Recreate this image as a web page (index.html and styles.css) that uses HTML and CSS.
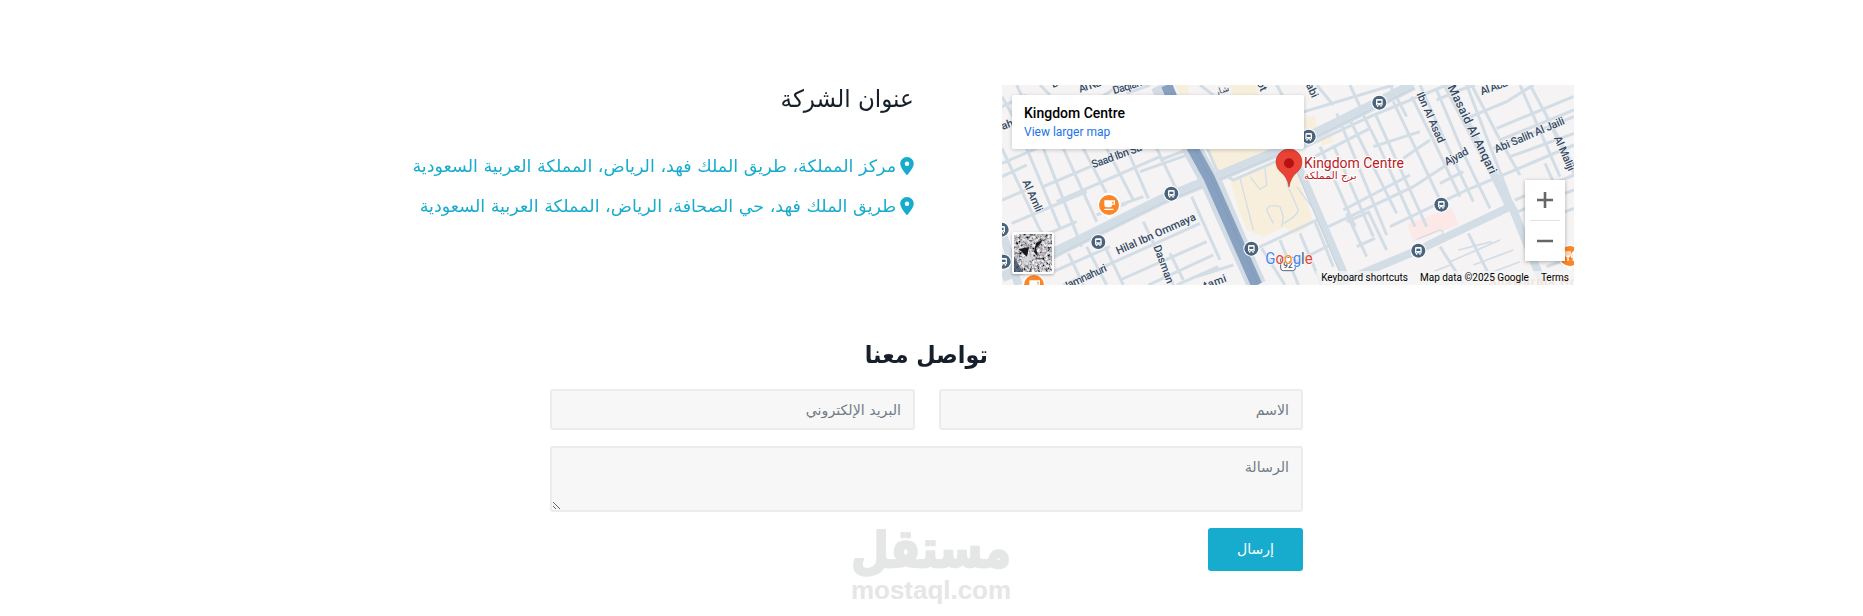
FILE: index.html
```html
<!DOCTYPE html>
<html lang="ar">
<head>
<meta charset="utf-8">
<title>تواصل معنا</title>
<link rel="stylesheet" href="styles.css">
</head>
<body>
<main dir="rtl">
  <section class="location">
    <div class="map" dir="ltr">
      <svg class="map-canvas" viewBox="6 15 1716 600">
        <defs>
          <g id="bus">
            <circle r="24" fill="#fff"/><circle r="21" fill="#4b647d"/>
            <path d="M-10-7q0-4 4-4H6q4 0 4 4V8H7v4H3V8H-3v4H-7V8h-3z" fill="#fff"/>
            <path d="M-6-6H6V1H-6z" fill="#4b647d"/><circle cx="-5" cy="5" r="1.6" fill="#4b647d"/><circle cx="5" cy="5" r="1.6" fill="#4b647d"/>
          </g>
          <g id="cafe">
            <path d="M0 44Q-8 34-20 28A36 36 0 1 1 20 28Q8 34 0 44z" fill="#fff" stroke="#d8dadd"/>
            <circle r="30" fill="#fb8527"/>
            <path d="M-14-14H18V-1H10Q9 7 2 7H-7Q-14 7-14 0zM10-10V-4H14V-10zM-14 11H14V15H-14z" fill="#fff"/>
          </g>
        </defs>
        <rect x="6" y="15" width="1716" height="600" fill="#f5f3f4"/>
        <g fill="#f7efdc">
          <path d="M525 15H565V45H540zM690 15H775V60H700zM895 120L945 105L955 190L900 200zM955 158L990 146L1000 185L965 197z"/>
          <path d="M620 205H820L800 220L650 272zM690 300L830 240L880 250L940 425L910 450L880 465L855 440L790 470L740 450L720 400z"/>
        </g>
        <path d="M1223 432L1355 383L1375 435L1240 485z" fill="#fce8e7"/>
        <g class="street">
          <path d="M6 80L80 45M6 250L110 205M50 15L80 80M120 15L150 45M6 50L45 120M80 205L180 445M130 205L245 500M6 205L115 440L150 500M6 360L90 325M35 430L260 335M110 475L230 425M190 205L290 425M250 205L345 390M320 205L400 360M380 205L445 355M470 205L530 330M130 320L400 205M170 365L480 230M290 405L380 370M290 60L360 15M380 40L450 15M480 240L560 210M420 275L590 215M6 290L80 255M345 380L430 350"/>
          <path d="M205 520L250 615M260 500L320 615M315 500L370 615M430 425L520 615M160 575L330 500M190 615L600 430M360 600L620 485M445 615L640 525M530 615L655 560M510 520L550 600M575 350L660 540M590 590L700 555"/>
          <path d="M600 15L640 45M650 270L700 300L860 230M655 285L750 510M760 510L950 420M840 480L895 615M900 460L965 615M945 425L1000 560M785 505L855 615M860 560L990 495M620 200L650 270M830 15L850 50M950 15L1000 75M905 205L1110 110L1340 15M895 100L1180 15M1080 85L1140 205L1245 440M1010 100L1160 465M1050 120L1190 400M1125 100L1280 440M1180 65L1325 370M1235 50L1300 180L1380 350M1120 200L1260 155M1210 235L1290 180M915 245L1110 145M1170 15L1220 110M1050 15L1080 80M960 200L1065 440M1000 195L1120 470M985 440L1240 320L1400 215M1030 390L1230 285M1070 500L1125 475M1040 400L1100 530M1105 395L1160 510M1040 425L1110 395M1170 440L1400 330L1580 255L1722 195M1260 15L1345 205L1420 365M1310 30L1390 220L1470 385M1320 310L1390 275M1450 235L1520 380"/>
          <path d="M1310 60L1380 30L1425 15M1400 115L1520 65L1600 15M1400 15L1530 355M1490 145L1720 50M1500 180L1722 90M1415 15L1500 180L1560 285M1560 15L1680 290M1590 15L1722 260M1640 110L1722 280M1480 205L1722 110M1530 230L1722 160M1545 360L1722 285M1540 400L1722 330M1635 250L1675 340M1640 560L1722 530"/>
          <path d="M1405 460L1480 610M1320 500L1390 610M1600 430L1722 385"/>
          <path stroke-width="5" d="M1375 510L1475 485M1350 545L1500 480M1420 555L1540 510M1440 590L1560 545M1300 575L1350 555"/>
        </g>
        <path class="path" d="M1250 478L1320 450Q1333 452 1327 463L1280 487M750 290L780 328L800 315L795 265M720 295L760 450M820 430L800 390Q805 370 840 380L850 410L845 440M860 310L895 390Q890 410 850 430M890 320L950 400"/>
        <g class="avenue">
          <path d="M6 590L110 550L170 515L480 362L630 300L850 208L1010 130L1240 15" stroke-width="32"/>
          <path d="M6 450Q28 530 55 615M895 260L1040 600M1010 612L1255 510L1535 378M1340 15L1485 290L1540 390L1630 615" stroke-width="24"/>
        </g>
        <path class="avenue-line" d="M110 560L172 524L482 371L632 309L852 217L1012 139L1242 24M885 262L1030 600"/>
        <path d="M480 15L575 205L628 300L675 405L770 615" fill="none" stroke="#d2dce4" stroke-width="58"/>
        <path d="M500 15L578 205L628 295L668 385L770 615" fill="none" stroke="#89a1c1" stroke-width="34"/>
        <path d="M505 15L583 205L633 295L673 385L775 615" fill="none" stroke="#7e98b9" stroke-width="2"/>
        <g class="label">
          <text transform="translate(279 265) rotate(-20)" textLength="158">Saad Ibn Sa</text>
          <text transform="translate(240 38) rotate(-18)" textLength="85">Al Nad</text>
          <text transform="translate(342 43) rotate(-17)" textLength="90">Daqiah</text>
          <text transform="translate(8 150) rotate(-20)">ah</text>
          <text transform="translate(158 24) rotate(-18)">D</text>
          <text transform="translate(67 305) rotate(66)" textLength="102">Al Amli</text>
          <text transform="translate(354 524) rotate(-24)" textLength="258">Hilal Ibn Ommaya</text>
          <text transform="translate(460 500) rotate(70)" textLength="120">Dasman</text>
          <text transform="translate(194 632) rotate(-25)" textLength="142">Jamnahuri</text>
          <text transform="translate(616 628) rotate(-20)" textLength="70">tami</text>
          <text transform="translate(770 9) rotate(66)">ot</text>
          <text transform="translate(917 15) rotate(65)" textLength="45">abi</text>
          <text transform="translate(1249 42) rotate(66)" textLength="163">Ibn Al Asad</text>
          <text class="label-major" transform="translate(1342 22) rotate(64)" textLength="292">Masaid Al Anqari</text>
          <text transform="translate(1445 46) rotate(-20)" textLength="85">Al Aba</text>
          <text transform="translate(1340 257) rotate(-28)" textLength="77">Ajyad</text>
          <text transform="translate(1489 219) rotate(-23)" textLength="225">Abi Salih Al Jaili</text>
          <text transform="translate(1661 174) rotate(66)" textLength="111">Al Maliji</text>
          <text class="label-ar" transform="translate(648 46) rotate(-20)">شار</text>
        </g>
        <use href="#bus" x="514" y="341"/><use href="#bus" x="295" y="486"/><use href="#bus" x="754" y="506"/><use href="#bus" x="926" y="170"/><use href="#bus" x="1138" y="68"/><use href="#bus" x="1324" y="374"/><use href="#bus" x="1255" y="512"/><use href="#bus" x="5" y="449"/><use href="#bus" x="11" y="545"/>
        <use href="#cafe" x="327" y="375"/><use href="#cafe" x="102" y="615"/>
        <g transform="translate(1709 528)">
          <path d="M0 44Q-8 34-20 28A34 34 0 1 1 20 28z" fill="#fff"/><circle r="30" fill="#fb8527"/>
          <path d="M-11-14V-4Q-11 2-5 2V15M-5-14V0M1-14V-4Q1 2-5 2M11 15V-12Q5-8 6 3H11" fill="none" stroke="#fff" stroke-width="4"/>
        </g>
        <g><rect x="842" y="532" width="44" height="40" rx="8" fill="#fff" stroke="#53677c" stroke-width="3"/><text x="850" y="563" font-size="25" font-weight="500" fill="#43566b">92</text></g>
        <path d="M867 321Q862 291 842 276A39 39 0 1 1 892 276Q872 291 867 321z" fill="#ea4335" stroke="#b3261e" stroke-width="1.5"/>
        <circle cx="867" cy="250" r="15" fill="#b31412"/>
        <g class="place">
          <text x="912" y="264" font-size="42" textLength="300">Kingdom Centre</text>
          <text class="place-ar" x="912" y="297" font-size="30" textLength="158" lengthAdjust="spacingAndGlyphs">برج المملكة</text>
        </g>
        <text x="1466" y="619" font-size="37" font-weight="500" fill="#f4a77d" textLength="265">Shawarma Ho</text>
        <g class="logo" font-size="47"><text x="796" y="552" textLength="142" lengthAdjust="spacingAndGlyphs"><tspan fill="#4285f4">G</tspan><tspan fill="#ea4335">o</tspan><tspan fill="#fb8c1a">o</tspan><tspan fill="#4285f4">g</tspan><tspan fill="#4b6588">l</tspan><tspan fill="#ea4335">e</tspan></text></g>
      </svg>
      <div class="map-card"><strong>Kingdom Centre</strong><a>View larger map</a></div>
      <div class="layer-toggle">
        <svg viewBox="0 0 38 38">
          <filter id="grain"><feTurbulence type="fractalNoise" baseFrequency=".38" numOctaves="3" seed="8"/><feColorMatrix values="1.9 0 0 0 -.45 1.8 .1 0 0 -.46 1.8 0 .1 0 -.44 0 0 0 0 1"/></filter>
          <rect width="38" height="38" filter="url(#grain)"/>
          <path d="M5 15L15 13L13 23zM22 9L28 6L27 9L22 14L24 23L20 18z" fill="#17191f"/><path d="M8 24L14 22L17 15L20 24L15 28L8 31z" fill="#d6d9df" opacity=".8"/><path d="M0 22L9 38H0z" fill="#32465f" opacity=".75"/>
        </svg>
      </div>
      <div class="zoom-controls">
        <svg viewBox="0 0 40 81"><path d="M12 20H28M20 12V28M12 61H28" stroke="#666" stroke-width="2.6"/><path d="M5 40.5H35" stroke="#e3e3e3"/></svg>
      </div>
      <div class="attribution"><span>Keyboard shortcuts</span><span>Map data ©2025 Google</span><span>Terms</span></div>
    </div>
    <div class="addresses">
      <h2><span class="fit fit-title">عنوان الشركة</span></h2>
      <ul>
        <li><svg viewBox="0 0 384 512"><path d="M215.7 499.2C267 435 384 279.400 384 192C384 86 298 0 192 0S0 86 0 192c0 87.400 117 243 168.300 307.200c12.300 15.300 35.100 15.300 47.400 0zM192 128a64 64 0 1 1 0 128a64 64 0 1 1 0-128z"/></svg><span class="fit fit-address">مركز المملكة، طريق الملك فهد، الرياض، المملكة العربية السعودية</span></li>
        <li><svg viewBox="0 0 384 512"><path d="M215.7 499.2C267 435 384 279.400 384 192C384 86 298 0 192 0S0 86 0 192c0 87.400 117 243 168.300 307.200c12.300 15.300 35.100 15.300 47.400 0zM192 128a64 64 0 1 1 0 128a64 64 0 1 1 0-128z"/></svg><span class="fit fit-address">طريق الملك فهد، حي الصحافة، الرياض، المملكة العربية السعودية</span></li>
      </ul>
    </div>
  </section>
  <section class="contact">
    <h1><span class="fit">تواصل معنا</span></h1>
    <form>
      <input type="text" placeholder="الاسم">
      <input type="text" placeholder="البريد الإلكتروني">
      <textarea placeholder="الرسالة"></textarea>
      <button type="button">إرسال</button>
    </form>
  </section>
  <svg class="watermark" viewBox="0 0 164 78">
    <text class="mark-ar" transform="translate(0 38) scale(1 1.2)" x="2" y="0" textLength="160" lengthAdjust="spacingAndGlyphs" direction="ltr">مستقل</text>
    <text class="mark-en" x="2" y="70" textLength="160" lengthAdjust="spacingAndGlyphs" direction="ltr">mostaql.com</text>
  </svg>
</main>
</body>
</html>
```
FILE: styles.css
```css
* { box-sizing: border-box; }
body { margin: 0; background: #fff; color: #17202a; font-family: "DejaVu Sans", sans-serif; overflow: hidden; }
main { position: relative; width: 1853px; height: 616px; padding-top: 85px; }
.location { display: grid; grid-template-columns: 572px 636px; column-gap: 88px; width: 1296px; height: 200px; margin: 0 279px 0 auto; }
.map { position: relative; overflow: hidden; font-family: Roboto, sans-serif; }
.map-canvas { display: block; width: 572px; height: 200px; }
.street { fill: none; stroke: #d3dde5; stroke-width: 9; }
.path { fill: none; stroke: #d3dde5; stroke-width: 4; }
.avenue { fill: none; stroke: #d3dde5; }
.avenue-line { fill: none; stroke: #bccbd7; stroke-width: 2; }
.label { font-size: 33px; font-weight: 500; fill: #344a64; stroke: #f8f7f8; stroke-width: 4px; paint-order: stroke; }
.label-major { font-size: 37px; }
.label-ar { font-size: 26px; }
.place { fill: #b9201d; stroke: #fff; stroke-width: 7px; paint-order: stroke; }
.place-ar { font-family: "DejaVu Sans", sans-serif; }
.logo { stroke: #fff; stroke-width: 3px; paint-order: stroke; }
.map-card { position: absolute; top: 10px; left: 10px; width: 292px; height: 54px; padding: 10px 12px; background: #fff; border-radius: 2px; box-shadow: 0 1px 4px rgba(0,0,0,.2); }
.map-card strong { display: block; font-size: 14px; line-height: 17px; font-weight: 500; color: #000; }
.map-card a { display: block; margin-top: 3px; font-size: 12px; line-height: 14px; color: #1a73e8; }
.layer-toggle { position: absolute; left: 10px; bottom: 11px; width: 42px; height: 42px; padding: 2px; background: #fff; border-radius: 2px; box-shadow: 0 1px 3px rgba(0,0,0,.3); }
.layer-toggle svg { display: block; width: 38px; height: 38px; overflow: hidden; }
.zoom-controls { position: absolute; right: 9px; top: 95px; width: 40px; height: 81px; background: #fff; box-shadow: 0 1px 4px rgba(0,0,0,.3); }
.zoom-controls svg { display: block; width: 40px; height: 81px; }
.attribution { position: absolute; right: 0; bottom: 0; display: flex; gap: 12px; height: 14px; padding: 0 5px; background: rgba(245,245,245,.75); font-size: 10px; line-height: 14px; color: #000; white-space: nowrap; }
.fit { display: inline-block; white-space: nowrap; transform-origin: right center; }
.fit-title { transform: scaleX(.96); }
.fit-address { transform: scaleX(1.031); }
.addresses h2 { height: 30px; margin: -1px 0 0; font-size: 24px; line-height: 30px; font-weight: 400; }
.addresses ul { margin: 32px 0 0; padding: 0; list-style: none; color: #17acce; }
.addresses li { display: flex; align-items: center; gap: 4px; height: 40px; font-size: 17px; line-height: 40px; }
.addresses li svg { width: 14px; height: 18px; flex: none; margin-top: -1px; fill: #17acce; }
.contact { width: 753px; margin: 52px auto 0; }
.contact h1 { height: 52px; margin: 0; font-size: 24px; line-height: 36px; text-align: center; }
.contact h1 .fit { transform: scaleX(.93); transform-origin: center; }
form { display: grid; grid-template-columns: 364px 365px; column-gap: 24px; row-gap: 16px; }
input, textarea { width: 100%; margin: 0; padding: 6px 12px; border: 2px solid #ececec; border-radius: 3px; background: #f7f7f7; font-family: "DejaVu Sans", sans-serif; font-size: 14.2px; line-height: 26px; }
input { height: 41px; }
textarea { grid-column: 1 / -1; height: 66px; display: block; overflow: hidden; }
input::placeholder, textarea::placeholder { color: #727b86; opacity: 1; }
button { width: 95px; height: 43px; padding: 0 0 2px; border: 0; border-radius: 3px; background: #17acce; color: #fff; font-family: "DejaVu Sans", sans-serif; font-size: 14px; }
.watermark { position: absolute; left: 849px; top: 529px; width: 164px; height: 78px; fill: #e5e6e6; pointer-events: none; }
.mark-ar { font: bold 44px "DejaVu Sans", sans-serif; stroke: #e5e6e6; stroke-width: 2px; stroke-linejoin: round; }
.mark-en { font: bold 26px "Liberation Sans", sans-serif; }
```
